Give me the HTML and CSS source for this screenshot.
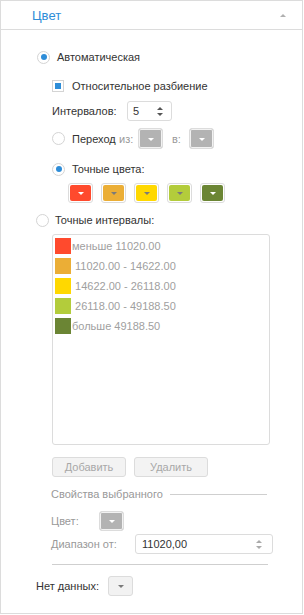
FILE: index.html
```html
<!DOCTYPE html>
<html lang="ru">
<head>
<meta charset="utf-8">
<link rel="stylesheet" href="styles.css">
</head>
<body>
<div class="panel">
  <div class="header">
    <span class="title">Цвет</span>
    <span class="collapse"></span>
  </div>
  <div class="body">
    <div class="row r-auto">
      <span class="radio checked"></span><span class="lbl">Автоматическая</span>
    </div>
    <div class="row r-rel">
      <span class="check checked"></span><span class="lbl">Относительное разбиение</span>
    </div>
    <div class="row r-int">
      <span class="lbl">Интервалов:</span>
      <div class="spin small"><span class="val">5</span><span class="arrows"><i class="up"></i><i class="down"></i></span></div>
    </div>
    <div class="row r-trans">
      <span class="radio"></span><span class="lbl name">Переход</span>
      <span class="lbl muted from">из:</span>
      <span class="swatch disabled"><i class="tri light"></i></span>
      <span class="lbl muted to">в:</span>
      <span class="swatch disabled"><i class="tri light"></i></span>
    </div>
    <div class="row r-exact">
      <span class="radio checked"></span><span class="lbl">Точные цвета:</span>
    </div>
    <div class="row r-colors">
      <span class="swatch"><b class="fill" style="background:#ff4a2d"><i class="tri light"></i></b></span>
      <span class="swatch"><b class="fill" style="background:#ebae36"><i class="tri"></i></b></span>
      <span class="swatch"><b class="fill" style="background:#ffd800"><i class="tri"></i></b></span>
      <span class="swatch"><b class="fill" style="background:#b3cc3b"><i class="tri"></i></b></span>
      <span class="swatch"><b class="fill" style="background:#6b8534"><i class="tri light"></i></b></span>
    </div>
    <div class="row r-intervals">
      <span class="radio"></span><span class="lbl">Точные интервалы:</span>
    </div>
    <div class="list">
      <div class="item"><span class="sq" style="background:#ff4a2d"></span><span>меньше 11020.00</span></div>
      <div class="item"><span class="sq" style="background:#ebae36"></span><span>&nbsp;11020.00 - 14622.00</span></div>
      <div class="item"><span class="sq" style="background:#ffd800"></span><span>&nbsp;14622.00 - 26118.00</span></div>
      <div class="item"><span class="sq" style="background:#b3cc3b"></span><span>&nbsp;26118.00 - 49188.50</span></div>
      <div class="item"><span class="sq" style="background:#6b8534"></span><span>больше 49188.50</span></div>
    </div>
    <div class="row r-buttons">
      <span class="btn b-add">Добавить</span>
      <span class="btn b-del">Удалить</span>
    </div>
    <div class="row r-group">
      <span class="lbl muted">Свойства выбранного</span><span class="gline"></span>
    </div>
    <div class="row r-color">
      <span class="lbl muted">Цвет:</span>
      <span class="swatch disabled"><i class="tri light"></i></span>
    </div>
    <div class="row r-range">
      <span class="lbl muted">Диапазон от:</span>
      <div class="spin wide"><span class="val">11020,00</span><span class="arrows faint"><i class="up"></i><i class="down"></i></span></div>
    </div>
    <div class="sep"></div>
    <div class="row r-nodata">
      <span class="lbl">Нет данных:</span>
      <span class="swatch empty"><i class="tri"></i></span>
    </div>
  </div>
</div>
</body>
</html>
```

FILE: styles.css
```css
html, body {
  margin: 0;
  padding: 0;
  background: #fff;
}
.panel {
  width: 303px;
  height: 614px;
  box-sizing: border-box;
  border: 1px solid #dcdcdc;
  font-family: "Liberation Sans", Arial, sans-serif;
  font-size: 11px;
  color: #333;
}
.header {
  height: 28px;
  border-bottom: 1px solid #dcdcdc;
  display: flex;
  align-items: center;
  justify-content: space-between;
  padding: 0 16px 0 31px;
}
.title {
  color: #2e8dd8;
  font-size: 13px;
  margin-top: 1px;
}
.collapse {
  width: 0;
  height: 0;
  border-left: 3px solid transparent;
  border-right: 3px solid transparent;
  border-bottom: 3px solid #b0b0b0;
}
.body {
  display: flex;
  flex-direction: column;
}
.row {
  display: flex;
  align-items: center;
  height: 20px;
}
.lbl { white-space: nowrap; flex: none; }
.radio {
  width: 11px;
  height: 11px;
  border: 1px solid #d4d4d4;
  border-radius: 50%;
  background: #fff;
  display: flex;
  align-items: center;
  justify-content: center;
  flex: none;
}
.radio.checked::after {
  content: "";
  width: 6px;
  height: 6px;
  border-radius: 50%;
  background: #2e8dd8;
}
.check {
  width: 10px;
  height: 10px;
  border: 1px solid #d4d4d4;
  display: flex;
  align-items: center;
  justify-content: center;
  flex: none;
}
.check.checked::after {
  content: "";
  width: 6px;
  height: 6px;
  background: #2e8dd8;
}
.muted { color: #999; }

.r-auto { margin-top: 17px; padding-left: 36px; }
.r-auto .lbl { margin-left: 7px; }
.r-rel { margin-top: 9px; padding-left: 51px; }
.r-rel .lbl { margin-left: 8px; }
.r-int { margin-top: 5px; padding-left: 51px; }
.r-int .lbl { width: 75px; }
.r-trans { margin-top: 7px; padding-left: 51px; height: 21px; }
.r-trans .name { margin-left: 7px; width: 47px; }
.r-trans .from { width: 19px; }
.r-trans .to { margin-left: 9px; width: 17px; }
.r-exact { margin-top: 10px; padding-left: 51px; }
.r-exact .lbl { margin-left: 7px; }
.r-colors { margin-top: 4px; padding-left: 67px; gap: 8px; }
.r-intervals { margin-top: 7px; padding-left: 35px; }
.r-intervals .lbl { margin-left: 6px; }

.spin {
  height: 20px;
  box-sizing: border-box;
  border: 1px solid #dcdcdc;
  border-radius: 3px;
  display: flex;
  align-items: center;
  justify-content: space-between;
  padding: 0 8px 0 5px;
  color: #333;
}
.spin.small { width: 45px; }
.spin.wide { width: 138px; padding-left: 6px; padding-right: 10px; }
.arrows {
  display: flex;
  flex-direction: column;
  gap: 3px;
}
.arrows i {
  display: block;
  width: 0;
  height: 0;
  border-left: 3px solid transparent;
  border-right: 3px solid transparent;
}
.arrows .up { border-bottom: 3px solid #555; }
.arrows .down { border-top: 3px solid #555; }
.arrows.faint .up { border-bottom-color: #aaa; }
.arrows.faint .down { border-top-color: #aaa; }

.swatch {
  width: 25px;
  height: 21px;
  box-sizing: border-box;
  border: 1px solid #dcdcdc;
  border-radius: 3px;
  padding: 1px;
  display: flex;
  flex: none;
  background: #fff;
}
.r-colors .swatch { height: 20px; }
.swatch.disabled {
  background: #b3b3b3;
  border-color: #dcdcdc;
  box-shadow: inset 0 0 0 1px #f2f2f2;
  align-items: center;
  justify-content: center;
}
.swatch.empty {
  background: #f2f2f2;
  align-items: center;
  justify-content: center;
}
.fill {
  flex: 1;
  border-radius: 2px;
  display: flex;
  align-items: center;
  justify-content: center;
}
.tri {
  display: block;
  width: 0;
  height: 0;
  border-left: 3px solid transparent;
  border-right: 3px solid transparent;
  border-top: 3px solid #7a7a7a;
  margin-top: 1px;
}
.tri.light { border-top-color: #fff; }

.list {
  margin: 4px 0 0 51px;
  width: 218px;
  height: 211px;
  box-sizing: border-box;
  border: 1px solid #dcdcdc;
  border-radius: 3px;
  padding: 3px 2px;
  display: flex;
  flex-direction: column;
  gap: 4px;
  color: #a0a0a0;
}
.item {
  display: flex;
  align-items: center;
  height: 16px;
}
.sq {
  width: 16px;
  height: 16px;
  flex: none;
  margin-right: 1px;
}

.r-buttons { margin-top: 12px; padding-left: 51px; gap: 8px; }
.btn {
  height: 20px;
  box-sizing: border-box;
  border: 1px solid #dcdcdc;
  border-radius: 3px;
  background: #f3f3f3;
  color: #a8a8a8;
  display: flex;
  align-items: center;
  justify-content: center;
}
.b-add { width: 74px; }
.b-del { width: 74px; }

.r-group { margin-top: 9px; padding-left: 50px; height: 16px; }
.r-group .lbl { width: 119px; }
.gline {
  width: 97px;
  height: 1px;
  background: #cfcfcf;
}
.r-color { margin-top: 9px; padding-left: 50px; }
.r-color .lbl { width: 48px; }
.r-color .swatch { height: 20px; }
.r-range { margin-top: 3px; padding-left: 50px; }
.r-range .lbl { width: 84px; }
.sep {
  margin: 10px 0 0 51px;
  width: 216px;
  height: 1px;
  background: #cfcfcf;
}
.r-nodata { margin-top: 11px; padding-left: 35px; }
.r-nodata .lbl { width: 72px; }
.r-nodata .swatch { height: 20px; }
```
